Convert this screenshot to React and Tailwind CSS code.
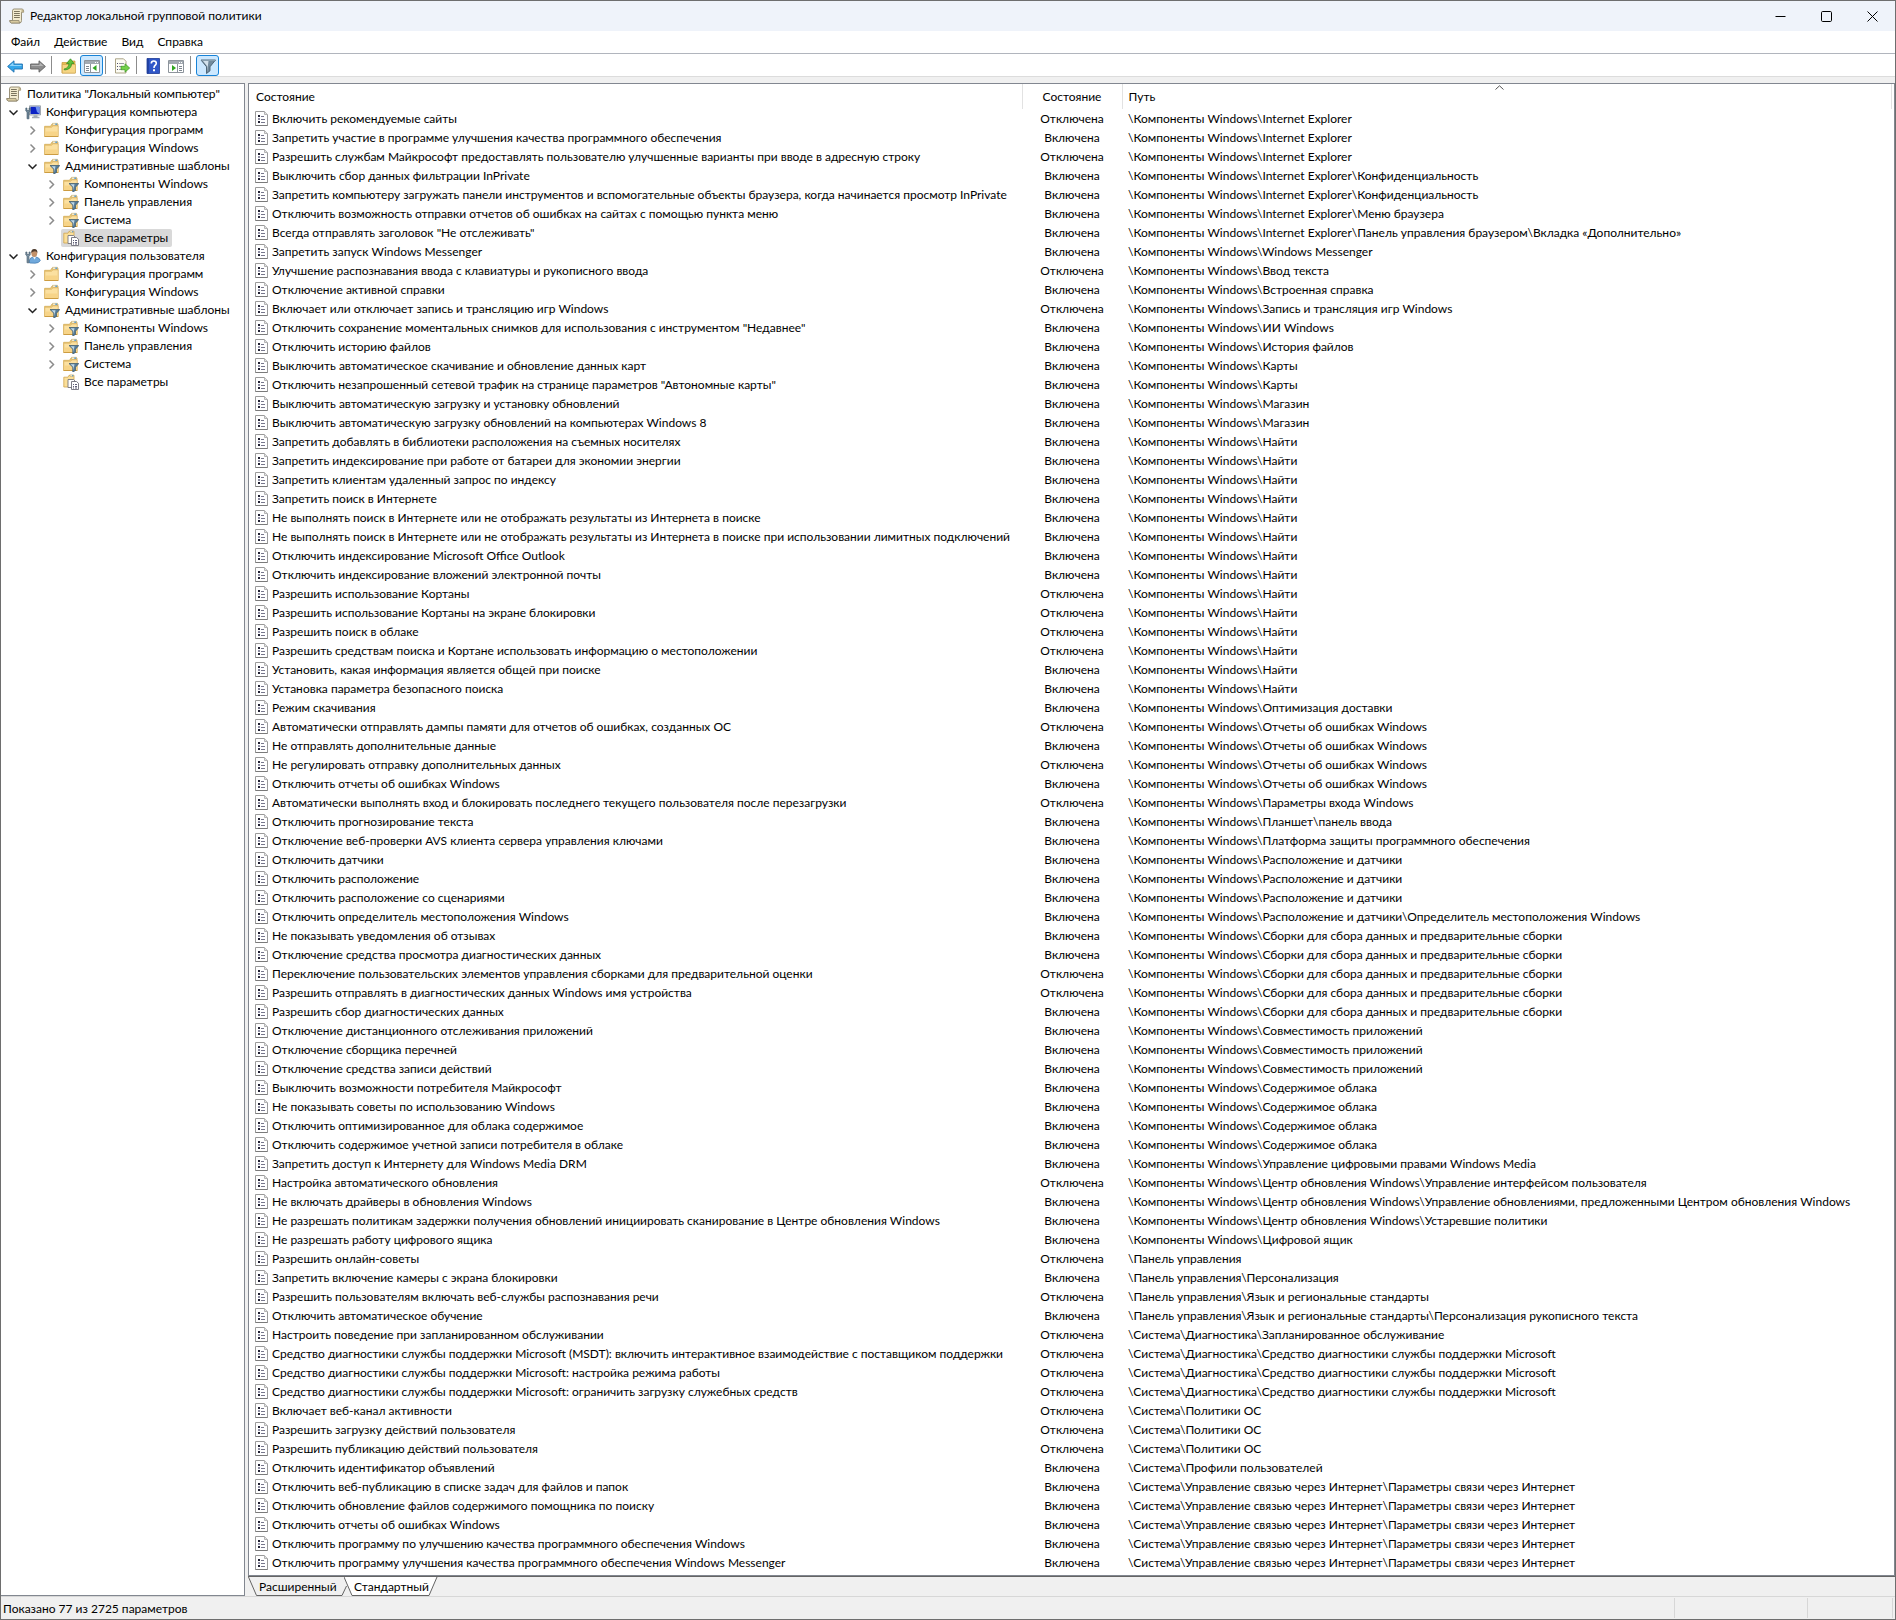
import React from "react";

const IE = "\\Компоненты Windows\\Internet Explorer";
const CW = "\\Компоненты Windows\\";
const FIND = CW + "Найти";
const ERR = CW + "Отчеты об ошибках Windows";
const LOC = CW + "Расположение и датчики";
const PREVIEW = CW + "Сборки для сбора данных и предварительные сборки";
const COMPAT = CW + "Совместимость приложений";
const CLOUD = CW + "Содержимое облака";
const WU = CW + "Центр обновления Windows\\";
const DIAG = "\\Система\\Диагностика\\";
const NET = "\\Система\\Управление связью через Интернет\\Параметры связи через Интернет";

// [name, enabled, path]
const POLICIES = [
  ["Включить рекомендуемые сайты", 0, IE],
  ["Запретить участие в программе улучшения качества программного обеспечения", 1, IE],
  ["Разрешить службам Майкрософт предоставлять пользователю улучшенные варианты при вводе в адресную строку", 0, IE],
  ["Выключить сбор данных фильтрации InPrivate", 1, IE + "\\Конфиденциальность"],
  ["Запретить компьютеру загружать панели инструментов и вспомогательные объекты браузера, когда начинается просмотр InPrivate", 1, IE + "\\Конфиденциальность"],
  ["Отключить возможность отправки отчетов об ошибках на сайтах с помощью пункта меню", 1, IE + "\\Меню браузера"],
  ["Всегда отправлять заголовок \"Не отслеживать\"", 1, IE + "\\Панель управления браузером\\Вкладка «Дополнительно»"],
  ["Запретить запуск Windows Messenger", 1, CW + "Windows Messenger"],
  ["Улучшение распознавания ввода с клавиатуры и рукописного ввода", 0, CW + "Ввод текста"],
  ["Отключение активной справки", 1, CW + "Встроенная справка"],
  ["Включает или отключает запись и трансляцию игр Windows", 0, CW + "Запись и трансляция игр Windows"],
  ["Отключить сохранение моментальных снимков для использования с инструментом \"Недавнее\"", 1, CW + "ИИ Windows"],
  ["Отключить историю файлов", 1, CW + "История файлов"],
  ["Выключить автоматическое скачивание и обновление данных карт", 1, CW + "Карты"],
  ["Отключить незапрошенный сетевой трафик на странице параметров \"Автономные карты\"", 1, CW + "Карты"],
  ["Выключить автоматическую загрузку и установку обновлений", 1, CW + "Магазин"],
  ["Выключить автоматическую загрузку обновлений на компьютерах Windows 8", 1, CW + "Магазин"],
  ["Запретить добавлять в библиотеки расположения на съемных носителях", 1, FIND],
  ["Запретить индексирование при работе от батареи для экономии энергии", 1, FIND],
  ["Запретить клиентам удаленный запрос по индексу", 1, FIND],
  ["Запретить поиск в Интернете", 1, FIND],
  ["Не выполнять поиск в Интернете или не отображать результаты из Интернета в поиске", 1, FIND],
  ["Не выполнять поиск в Интернете или не отображать результаты из Интернета в поиске при использовании лимитных подключений", 1, FIND],
  ["Отключить индексирование Microsoft Office Outlook", 1, FIND],
  ["Отключить индексирование вложений электронной почты", 1, FIND],
  ["Разрешить использование Кортаны", 0, FIND],
  ["Разрешить использование Кортаны на экране блокировки", 0, FIND],
  ["Разрешить поиск в облаке", 0, FIND],
  ["Разрешить средствам поиска и Кортане использовать информацию о местоположении", 0, FIND],
  ["Установить, какая информация является общей при поиске", 1, FIND],
  ["Установка параметра безопасного поиска", 1, FIND],
  ["Режим скачивания", 1, CW + "Оптимизация доставки"],
  ["Автоматически отправлять дампы памяти для отчетов об ошибках, созданных ОС", 0, ERR],
  ["Не отправлять дополнительные данные", 1, ERR],
  ["Не регулировать отправку дополнительных данных", 0, ERR],
  ["Отключить отчеты об ошибках Windows", 1, ERR],
  ["Автоматически выполнять вход и блокировать последнего текущего пользователя после перезагрузки", 0, CW + "Параметры входа Windows"],
  ["Отключить прогнозирование текста", 1, CW + "Планшет\\панель ввода"],
  ["Отключение веб-проверки AVS клиента сервера управления ключами", 1, CW + "Платформа защиты программного обеспечения"],
  ["Отключить датчики", 1, LOC],
  ["Отключить расположение", 1, LOC],
  ["Отключить расположение со сценариями", 1, LOC],
  ["Отключить определитель местоположения Windows", 1, LOC + "\\Определитель местоположения Windows"],
  ["Не показывать уведомления об отзывах", 1, PREVIEW],
  ["Отключение средства просмотра диагностических данных", 1, PREVIEW],
  ["Переключение пользовательских элементов управления сборками для предварительной оценки", 0, PREVIEW],
  ["Разрешить отправлять в диагностических данных Windows имя устройства", 0, PREVIEW],
  ["Разрешить сбор диагностических данных", 1, PREVIEW],
  ["Отключение дистанционного отслеживания приложений", 1, COMPAT],
  ["Отключение сборщика перечней", 1, COMPAT],
  ["Отключение средства записи действий", 1, COMPAT],
  ["Выключить возможности потребителя Майкрософт", 1, CLOUD],
  ["Не показывать советы по использованию Windows", 1, CLOUD],
  ["Отключить оптимизированное для облака содержимое", 1, CLOUD],
  ["Отключить содержимое учетной записи потребителя в облаке", 1, CLOUD],
  ["Запретить доступ к Интернету для Windows Media DRM", 1, CW + "Управление цифровыми правами Windows Media"],
  ["Настройка автоматического обновления", 0, WU + "Управление интерфейсом пользователя"],
  ["Не включать драйверы в обновления Windows", 1, WU + "Управление обновлениями, предложенными Центром обновления Windows"],
  ["Не разрешать политикам задержки получения обновлений инициировать сканирование в Центре обновления Windows", 1, WU + "Устаревшие политики"],
  ["Не разрешать работу цифрового ящика", 1, CW + "Цифровой ящик"],
  ["Разрешить онлайн-советы", 0, "\\Панель управления"],
  ["Запретить включение камеры с экрана блокировки", 1, "\\Панель управления\\Персонализация"],
  ["Разрешить пользователям включать веб-службы распознавания речи", 0, "\\Панель управления\\Язык и региональные стандарты"],
  ["Отключить автоматическое обучение", 1, "\\Панель управления\\Язык и региональные стандарты\\Персонализация рукописного текста"],
  ["Настроить поведение при запланированном обслуживании", 0, DIAG + "Запланированное обслуживание"],
  ["Средство диагностики службы поддержки Microsoft (MSDT): включить интерактивное взаимодействие с поставщиком поддержки", 0, DIAG + "Средство диагностики службы поддержки Microsoft"],
  ["Средство диагностики службы поддержки Microsoft: настройка режима работы", 0, DIAG + "Средство диагностики службы поддержки Microsoft"],
  ["Средство диагностики службы поддержки Microsoft: ограничить загрузку служебных средств", 0, DIAG + "Средство диагностики службы поддержки Microsoft"],
  ["Включает веб-канал активности", 0, "\\Система\\Политики ОС"],
  ["Разрешить загрузку действий пользователя", 0, "\\Система\\Политики ОС"],
  ["Разрешить публикацию действий пользователя", 0, "\\Система\\Политики ОС"],
  ["Отключить идентификатор объявлений", 1, "\\Система\\Профили пользователей"],
  ["Отключить веб-публикацию в списке задач для файлов и папок", 1, NET],
  ["Отключить обновление файлов содержимого помощника по поиску", 1, NET],
  ["Отключить отчеты об ошибках Windows", 1, NET],
  ["Отключить программу по улучшению качества программного обеспечения Windows", 1, NET],
  ["Отключить программу улучшения качества программного обеспечения Windows Messenger", 1, NET],
];

const ADMIN = (selected) => ({
  label: "Административные шаблоны",
  icon: "filter",
  open: true,
  children: [
    { label: "Компоненты Windows", icon: "filter" },
    { label: "Панель управления", icon: "filter" },
    { label: "Система", icon: "filter" },
    { label: "Все параметры", icon: "pages", leaf: true, selected },
  ],
});

const SECTION = (selected) => [
  { label: "Конфигурация программ", icon: "folder" },
  { label: "Конфигурация Windows", icon: "folder" },
  ADMIN(selected),
];

const TREE = [
  { label: "Конфигурация компьютера", icon: "computer", open: true, children: SECTION(true) },
  { label: "Конфигурация пользователя", icon: "user", open: true, children: SECTION(false) },
];

function Svg({ children }) {
  return (
    <svg viewBox="0 0 16 16" className="size-4 shrink-0" aria-hidden="true">
      {children}
    </svg>
  );
}

function ScrollIcon() {
  return (
    <Svg>
      <path d="M3.500 12.500V2.800Q3.500 1 5.200 1H13Q14.600 1.200 14.600 3V4.200H12.500V12.500Q12.500 15 10.500 15H2.500Q.8 14.800.8 12.500Z" fill="#f3ebcf" stroke="#8f866c" strokeWidth=".9" />
      <path d="M12.500 4.200V2.500Q12.700 1.200 13.500 1.200Q14.600 1.500 14.600 4.200Z" fill="#c2b58d" />
      <path d="M.8 12.500H10Q10 14.500 11 15H2.500Q.8 14.800.8 12.500Z" fill="#d8caa0" stroke="#8f866c" strokeWidth=".8" />
      <path d="M5 3.500H10.800M5 5.500H10.800M5 7.500H10.800M5 9.500H10.800" stroke="#7b745e" />
    </Svg>
  );
}

const FolderShape = () => (
  <>
    <path d="M.6 4.300H6.500L8 2H14V14.500H.6Z" fill="#eec977" stroke="#cfa54e" strokeWidth=".7" />
    <path d="M8.500 1.300H13.500V3.200H8.500Z" fill="#fdf6e0" stroke="#b9a060" strokeWidth=".5" />
    <path d="M11.300 1.600H13.100V2.800H11.300Z" fill="#3f8fd0" />
    <path d="M.8 5.300H7.500L9 3.900H14.200V14.500H.8Z" fill="#fbe0a0" stroke="#d8b05c" strokeWidth=".6" />
    <path d="M1.200 9.500H13.800V14.100H1.200Z" fill="#f7d488" />
    <path d="M.8 14.500H14.200" stroke="#c9983c" strokeWidth=".9" />
  </>
);

function TreeIcon({ kind }) {
  if (kind === "folder") return <Svg><FolderShape /></Svg>;
  if (kind === "filter")
    return (
      <Svg>
        <FolderShape />
        <path d="M6 7.500H15.800L12.500 11.200V14.500L9.800 16V11.200Z" fill="#557c99" stroke="#38566d" strokeWidth=".7" />
        <path d="M7.500 8.200H11.500L11 11V14.500L10.300 11Z" fill="#bfd7e6" />
      </Svg>
    );
  if (kind === "pages")
    return (
      <Svg>
        <path d="M.8 3.200H5L6 1.300H11V13H.8Z" fill="#fbdf98" stroke="#d0a54c" strokeWidth=".8" />
        <path d="M7 1H10.500V2.500H7Z" fill="#fdf6e0" stroke="#b9a060" strokeWidth=".5" />
        <path d="M9 1.200H10.200V2.200H9Z" fill="#3f8fd0" />
        <path d="M5 5.500H10.500L12 7V13.500H5Z" fill="#fff" stroke="#77777f" strokeWidth=".9" />
        <path d="M8.500 7.500H13.500L15.500 9.300V15.500H8.500Z" fill="#fff" stroke="#6e6e78" strokeWidth=".9" />
        <path d="M10 10.500H11M10 12.500H11M10 14H11M12 10.500H14M12 12.500H14M12 14H14" stroke="#4d4d68" strokeWidth=".9" />
      </Svg>
    );
  if (kind === "computer")
    return (
      <Svg>
        <path d="M4.500 1.800H15.500V11H4.500Z" fill="#d3d8de" stroke="#8e979f" strokeWidth=".8" />
        <path d="M5.500 2.800H14.500V10H5.500Z" fill="#0c22c4" />
        <path d="M10.500 2.800H14.500V10L12 8Z" fill="#6f92ee" />
        <path d="M8.500 11.300H12.500V12.800H14.500V14.300H7V12.800H8.500Z" fill="#a4acb5" />
        <path d="M.8 4V7L2 8.200V14.800H4V8.200L5.200 7V4H4V6.500H2V4Z" fill="#6f8799" stroke="#3f5769" strokeWidth=".6" />
      </Svg>
    );
  return (
    <Svg>
      <path d="M4.500 15V12Q5 9.500 8 9H11Q14.500 9.500 15.300 12.500Q14 15.200 10 15.200Z" fill="#70a9dc" stroke="#3f78ad" strokeWidth=".7" />
      <path d="M8 9L9.600 11.500L11 9Z" fill="#eef6fd" />
      <ellipse cx="9.300" cy="5.300" rx="2.900" ry="3.700" fill="#c2916a" />
      <path d="M6.300 5Q6 1 9.300.9Q12.700 1 12.400 5Q11.800 3.500 10 3.300Q7.500 3.300 6.300 5Z" fill="#4d3c30" />
      <path d="M.8 4V7L2 8.200V14.800H4V8.200L5.200 7V4H4V6.500H2V4Z" fill="#7d92a3" stroke="#3f5769" strokeWidth=".6" />
    </Svg>
  );
}

function PolicyIcon() {
  return (
    <svg viewBox="0 0 13 15" className="h-[15px] w-[13px] shrink-0" aria-hidden="true">
      <path d="M.5.5H9.500L12.500 3.500V14.500H.5Z" fill="#fff" stroke="#9a9a9a" />
      <path d="M.5 14.500H12.500" stroke="#7a7a7a" />
      <path d="M9.500.5V3.500H12.500" fill="#e4e4e4" stroke="#b4b4b4" />
      <path d="M3 4H5V6H3ZM3 10H5V12H3Z" fill="#1e1e30" />
      <path d="M3 7H5V9H3Z" fill="#8a8aa0" />
      <path d="M6 5.500H9M6 8.500H10M6 11.500H10" stroke="#77778c" />
    </svg>
  );
}

function Chevron({ open }) {
  return open ? (
    <svg viewBox="0 0 19 18" className="h-[18px] w-[19px]" aria-hidden="true">
      <path d="M5.500 7.500L9.500 11.500L13.500 7.500" fill="none" stroke="#222" strokeWidth="1.500" />
    </svg>
  ) : (
    <svg viewBox="0 0 19 18" className="h-[18px] w-[19px]" aria-hidden="true">
      <path d="M7.500 5.500L11.500 9.500L7.500 13.500" fill="none" stroke="#8b8b8b" strokeWidth="1.500" />
    </svg>
  );
}

function Branch({ node }) {
  return (
    <li role="treeitem" aria-expanded={node.leaf ? undefined : !!node.open} aria-selected={!!node.selected}>
      <div className="flex h-[18px]">
        {node.leaf ? (
          <span className="w-[19px]" />
        ) : (
          <button type="button" aria-label={node.label} className="w-[19px]">
            <Chevron open={node.open} />
          </button>
        )}
        <button
          type="button"
          className={
            "flex items-center gap-[5px] pr-1 pl-0.5 whitespace-nowrap " + (node.selected ? "rounded-xs bg-[#d9d9d9]" : "")
          }
        >
          <TreeIcon kind={node.icon} />
          {node.label}
        </button>
      </div>
      {node.children && (
        <ul role="group" className="pl-[19px]">
          {node.children.map((c) => (
            <Branch key={c.label} node={c} />
          ))}
        </ul>
      )}
    </li>
  );
}

const WindowGrid = ({ flip }) => (
  <>
    <path d="M.5 2.500H15.500V14.500H.5Z" fill="#fff" stroke="#8d949c" />
    <path d="M1 3H15V6H1Z" fill="#a3aab2" />
    <path d="M11 4.500H12M13 4.500H14" stroke="#fff" />
    {flip ? (
      <>
        <path d="M9.500 6V14" stroke="#8d949c" />
        <path d="M11 8.500H14M11 10.500H14M11 12.500H14" stroke="#7d868f" />
        <path d="M4 7L8 10L4 13Z" fill="#2fa51f" />
      </>
    ) : (
      <>
        <path d="M6.500 6V14" stroke="#8d949c" />
        <path d="M2 8.500H5M2 10.500H5M2 12.500H5" stroke="#7d868f" />
        <path d="M12.500 7L8.500 10L12.500 13Z" fill="#2fa51f" />
      </>
    )}
  </>
);

function ToolButton({ label, active, children }) {
  return (
    <button
      type="button"
      aria-label={label}
      aria-pressed={active}
      className={
        "flex h-[21px] w-[23px] items-center justify-center " + (active ? "rounded-[3px] border border-[#1883d7] bg-[#cce8ff]" : "")
      }
    >
      {children}
    </button>
  );
}

const Divider = () => <span className="h-[18px] w-px self-center bg-[#8c8c8c]" />;

function Toolbar() {
  return (
    <div role="toolbar" aria-label="Панель инструментов" className="flex h-[22px] items-end bg-white pl-0.5">
      <ToolButton label="Назад">
        <Svg>
          <path d="M.6 8.500L7 2.800V6H15.400V11H7V14.200Z" fill="#35a7ea" stroke="#1f6fae" strokeWidth=".9" />
          <path d="M2.500 8.100L6.300 4.500V6.900H14.500V8.100Z" fill="#8fd4fb" />
        </Svg>
      </ToolButton>
      <ToolButton label="Вперед">
        <Svg>
          <path d="M15.400 8.500L9 2.800V6H.6V11H9V14.200Z" fill="#8d8d8d" stroke="#636363" strokeWidth=".9" />
          <path d="M13.500 8.100L9.700 4.500V6.900H1.500V8.100Z" fill="#b5b5b5" />
        </Svg>
      </ToolButton>
      <span className="w-0.5" />
      <Divider />
      <span className="w-[5px]" />
      <ToolButton label="На один уровень вверх">
        <Svg>
          <path d="M1 4.500H7L8.300 3H14V15H1Z" fill="#e8bc55" stroke="#c79a3a" strokeWidth=".7" />
          <path d="M1.200 6.500H14.500V15.100H1.200Z" fill="#f6d584" stroke="#c9a046" strokeWidth=".6" />
          <path d="M3 11Q7.500 10.500 8 5.500H5.500L9.500.8L13 5.500H10.600Q10.500 11.500 3.500 12Z" fill="#5fc23c" stroke="#2f8a1d" strokeWidth=".7" />
        </Svg>
      </ToolButton>
      <ToolButton label="Показать или скрыть дерево консоли" active>
        <Svg><WindowGrid /></Svg>
      </ToolButton>
      <span className="w-0.5" />
      <Divider />
      <span className="w-1" />
      <ToolButton label="Экспортировать список">
        <Svg>
          <path d="M1.500.8H9.500L12 3.300V15H1.500Z" fill="#fdfcf3" stroke="#a39b7c" strokeWidth=".9" />
          <path d="M3 5.500H4M3 8.500H4M3 11.500H4" stroke="#4b4b6b" />
          <path d="M5 5.500H10M5 8.500H8M5 11.500H8" stroke="#8c8c9c" strokeWidth=".9" />
          <path d="M7 8.300H11V5.800L15.700 10L11 14.200V11.700H7Z" fill="#74d14a" stroke="#3b9a22" strokeWidth=".7" />
        </Svg>
      </ToolButton>
      <span className="w-[3px]" />
      <Divider />
      <span className="w-1" />
      <ToolButton label="Справка">
        <Svg>
          <path d="M2 .5H14.500V15.500H2Z" fill="#2f56c8" stroke="#1d3a94" strokeWidth=".8" />
          <path d="M2 .8H3.800V15.200H2Z" fill="#1f3f9e" />
          <path d="M6.300 5.500Q6.300 3 8.800 3Q11.300 3 11.300 5.300Q11.300 6.600 10 7.500Q9 8.200 9 10" fill="none" stroke="#fff" strokeWidth="1.600" />
          <path d="M8 11.300H10V13.200H8Z" fill="#fff" />
        </Svg>
      </ToolButton>
      <ToolButton label="Показать или скрыть панель действий">
        <Svg><WindowGrid flip /></Svg>
      </ToolButton>
      <span className="w-[3px]" />
      <Divider />
      <span className="w-[5px]" />
      <ToolButton label="Фильтр" active>
        <Svg>
          <path d="M1 2H15.500L10 8.800V12.800L6.500 15.500V8.800Z" fill="#728a9c" stroke="#485d6e" strokeWidth=".9" />
          <path d="M3 3H8.500L7.800 8.500V13.500L7.200 8.300Z" fill="#d4e2ec" />
          <path d="M1.500 2.500H15" stroke="#93a9ba" strokeWidth=".8" />
        </Svg>
      </ToolButton>
    </div>
  );
}

function TitleBar() {
  return (
    <header className="flex h-[30px] items-center bg-[#eff3fa] pl-2">
      <ScrollIcon />
      <h1 className="ml-[5px] flex-1 truncate">Редактор локальной групповой политики</h1>
      <button type="button" aria-label="Свернуть" className="flex h-full w-[45px] items-center justify-center">
        <svg viewBox="0 0 11 11" className="size-[11px]"><path d="M.5 5.500H10.500" stroke="#000" /></svg>
      </button>
      <button type="button" aria-label="Развернуть" className="flex h-full w-[46px] items-center justify-center">
        <svg viewBox="0 0 11 11" className="size-[11px]">
          <rect x=".5" y=".5" width="10" height="10" rx="1.200" fill="none" stroke="#000" />
        </svg>
      </button>
      <button type="button" aria-label="Закрыть" className="flex h-full w-[46px] items-center justify-center">
        <svg viewBox="0 0 11 11" className="size-[11px]"><path d="M.5.5L10.500 10.500M10.500.5L.5 10.500" stroke="#000" /></svg>
      </button>
    </header>
  );
}

function PolicyTable() {
  return (
    <table className="w-full table-fixed border-collapse whitespace-nowrap">
      <colgroup>
        <col className="w-[773px]" />
        <col className="w-[100px]" />
        <col />
        <col className="w-[3px]" />
      </colgroup>
      <thead>
        <tr className="h-[25px]">
          <th scope="col" className="border-r border-[#e2e2e2] p-0 pl-[7px] text-left font-normal">Состояние</th>
          <th scope="col" className="border-r border-[#e2e2e2] p-0 text-center font-normal">Состояние</th>
          <th scope="col" aria-sort="ascending" className="relative border-r border-[#e2e2e2] p-0 pl-1.5 text-left font-normal">
            Путь
            <svg viewBox="0 0 9 5" className="absolute top-px left-1/2 -ml-3 h-[5px] w-[9px]" aria-hidden="true">
              <path d="M.5 4.500L4.500.8L8.500 4.500" fill="none" stroke="#555" />
            </svg>
          </th>
          <td />
        </tr>
      </thead>
      <tbody>
        {POLICIES.map(([name, on, path], i) => (
          <tr key={i} className="h-[19px]">
            <td className="p-0 pl-1.5">
              <div className="flex items-center gap-1">
                <PolicyIcon />
                {name}
              </div>
            </td>
            <td className="p-0 text-center">{on ? "Включена" : "Отключена"}</td>
            <td className="p-0 pl-1.5">{path}</td>
            <td />
          </tr>
        ))}
      </tbody>
    </table>
  );
}

function ViewTabs() {
  return (
    <div role="tablist" className="flex h-[19px] bg-[#f0f0f0]">
      <button role="tab" aria-selected="false" type="button" className="relative h-[19px] w-[100px] pl-[11px] text-left">
        <svg viewBox="0 0 100 19" className="absolute inset-0 h-[19px] w-[100px]" aria-hidden="true">
          <path d="M.5 0L8.500 18.500H94L98.500 9" fill="none" stroke="#646464" />
        </svg>
        <span className="relative">Расширенный</span>
      </button>
      <button role="tab" aria-selected="true" type="button" className="relative -ml-1 h-[19px] w-[94px] pl-[10px] text-left">
        <svg viewBox="0 0 94 19" className="absolute inset-0 h-[19px] w-[94px]" aria-hidden="true">
          <path d="M0 0L8 18.500H85L93 0Z" fill="#fff" />
          <path d="M0 0L8 18.500H85L93 0" fill="none" stroke="#646464" />
        </svg>
        <span className="relative">Стандартный</span>
      </button>
    </div>
  );
}

export default function App() {
  return (
    <div className="flex min-h-screen flex-col border border-[#6e6e6e] bg-[#f0f0f0] font-['Lato','Noto_Sans',sans-serif] text-[12px] leading-[18px] text-black">
      <TitleBar />
      <nav className="flex h-[23px] items-center gap-3.5 border-b border-[#b1b5bd] bg-white pl-2.5">
        <button type="button">Файл</button>
        <button type="button">Действие</button>
        <button type="button">Вид</button>
        <button type="button">Справка</button>
      </nav>
      <Toolbar />
      <div className="flex flex-1 border-t border-[#dcdcdc] pt-1.5">
        <aside className="w-[244px] shrink-0 border-t border-r border-b border-[#828790] bg-white pt-px pl-[3px]">
          <ul role="tree">
            <li role="treeitem" aria-expanded="true">
              <button type="button" className="flex h-[18px] items-center gap-[5px] pl-0.5 whitespace-nowrap">
                <ScrollIcon />
                Политика "Локальный компьютер"
              </button>
              <ul role="group">
                {TREE.map((n) => (
                  <Branch key={n.label} node={n} />
                ))}
              </ul>
            </li>
          </ul>
        </aside>
        <main className="ml-[3px] flex min-w-0 flex-1 flex-col">
          <div className="flex-1 border border-[#828790] bg-white">
            <PolicyTable />
          </div>
          <div className="border-t border-[#646464]">
            <ViewTabs />
          </div>
        </main>
      </div>
      <footer className="flex h-[23px] border-t border-[#d7d7d7] pr-0.5">
        <span className="flex flex-1 items-center pt-0.5 pl-0.5">Показано 77 из 2725 параметров</span>
        <span className="mt-px h-5 w-[133px] border-l border-[#d7d7d7]" />
        <span className="mt-px h-5 w-[86px] border-x border-[#d7d7d7]" />
      </footer>
    </div>
  );
}
